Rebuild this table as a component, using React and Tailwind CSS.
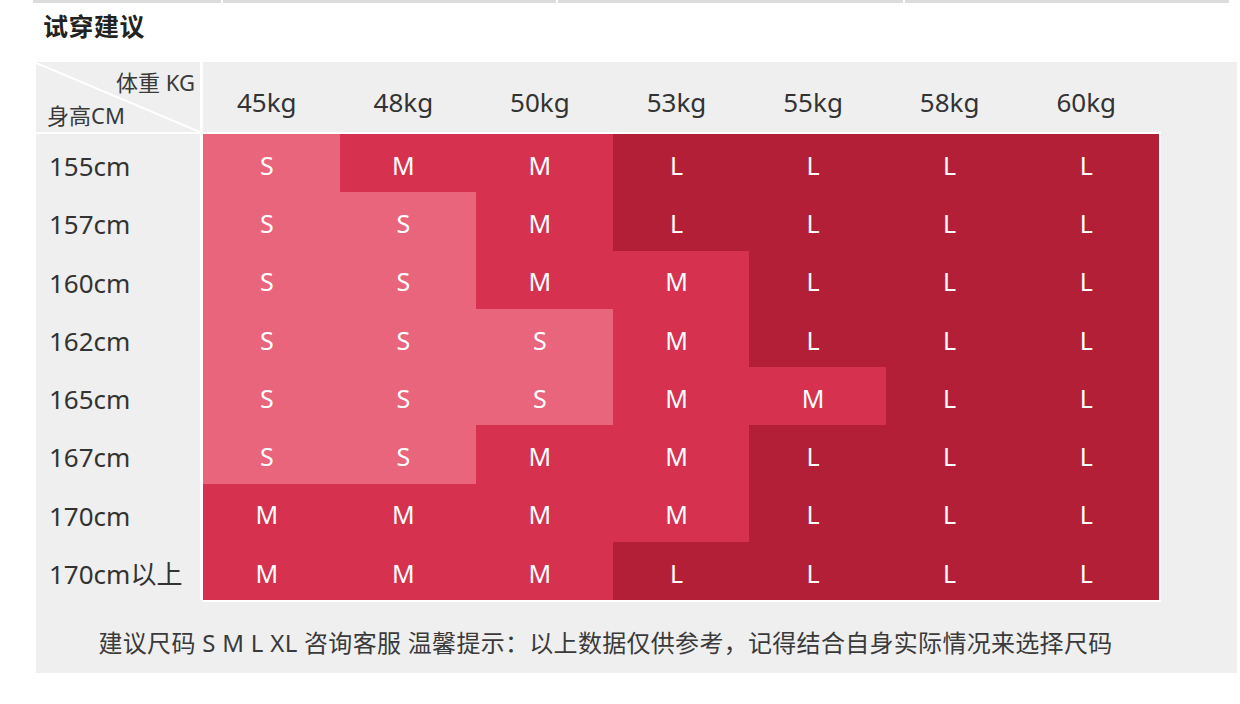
import React from "react";

const weights = ["45kg", "48kg", "50kg", "53kg", "55kg", "58kg", "60kg"];

const rows = [
  { height: "155cm", sizes: ["S", "M", "M", "L", "L", "L", "L"] },
  { height: "157cm", sizes: ["S", "S", "M", "L", "L", "L", "L"] },
  { height: "160cm", sizes: ["S", "S", "M", "M", "L", "L", "L"] },
  { height: "162cm", sizes: ["S", "S", "S", "M", "L", "L", "L"] },
  { height: "165cm", sizes: ["S", "S", "S", "M", "M", "L", "L"] },
  { height: "167cm", sizes: ["S", "S", "M", "M", "L", "L", "L"] },
  { height: "170cm", sizes: ["M", "M", "M", "M", "L", "L", "L"] },
  { height: "170cm以上", sizes: ["M", "M", "M", "L", "L", "L", "L"] },
];

// 每个尺码对应的底色
const sizeColor = {
  S: "bg-[#e8657c]",
  M: "bg-[#d6314f]",
  L: "bg-[#b41f38]",
};

export default function App() {
  return (
    <div className="w-[1240px] h-[704px] bg-white text-[#333] font-['Noto_Sans','Noto_Sans_CJK_SC',sans-serif]">
      {/* 上一张表的底边 */}
      <div className="flex gap-[2px] ml-[33px] w-[1196px] h-[3px]">
        <div className="w-[188px] bg-[#dcdcdc]"></div>
        <div className="w-[333px] bg-[#dcdcdc]"></div>
        <div className="w-[345px] bg-[#dcdcdc]"></div>
        <div className="flex-1 bg-[#dcdcdc]"></div>
      </div>

      {/* 标题 */}
      <div className="pl-[43px] pt-[4px] h-[59px]">
        <h2 className="text-[25px] leading-[38px] font-bold text-[#222] tracking-[0.5px]">试穿建议</h2>
      </div>

      {/* 表格面板 */}
      <div className="ml-[36px] w-[1201px] h-[611px] bg-[#efefef]">
        <div className="w-[1125px]">
          {/* 表头 */}
          <div className="flex h-[72px] border-b-2 border-white">
            <div className="relative w-[167px] border-r-[3px] border-white">
              <svg className="absolute inset-0 w-full h-full" viewBox="0 0 164 70" preserveAspectRatio="none">
                <line x1="0" y1="1" x2="164" y2="70" stroke="white" strokeWidth="2" />
              </svg>
              <div className="absolute right-[5px] top-[4px] text-[22px] leading-[32px] text-[#3a3a3a]">体重 KG</div>
              <div className="absolute left-[11px] top-[37px] text-[22px] leading-[32px] text-[#3a3a3a]">身高CM</div>
            </div>
            <div className="grid grid-cols-7 w-[956px] pt-[10px]">
              {weights.map((w) => (
                <div key={w} className="flex items-center justify-center pr-[9px] text-[26px]">
                  {w}
                </div>
              ))}
            </div>
          </div>

          {/* 表身 */}
          <div className="flex">
            <div className="w-[167px] h-[466px] border-r-[3px] border-white grid grid-rows-8">
              {rows.map((r) => (
                <div key={r.height} className="flex items-center pl-[13px] pt-[7px] text-[26px] whitespace-nowrap">
                  {r.height}
                </div>
              ))}
            </div>
            <div className="w-[958px] h-[468px] border-r-2 border-b-2 border-white grid grid-cols-7 grid-rows-8">
              {rows.map((r) =>
                r.sizes.map((s, i) => (
                  <div
                    key={r.height + i}
                    className={`flex items-center justify-center pt-[5px] pr-[9px] text-[25px] text-white ${sizeColor[s]}`}
                  >
                    {s}
                  </div>
                ))
              )}
            </div>
          </div>
        </div>

        {/* 说明 */}
        <p className="mt-[23px] text-center text-[24px] leading-[36px] tracking-[0.3px] text-[#3a3a3a] pr-[62px]">
          建议尺码 S M L XL 咨询客服 温馨提示：以上数据仅供参考，记得结合自身实际情况来选择尺码
        </p>
      </div>
    </div>
  );
}
